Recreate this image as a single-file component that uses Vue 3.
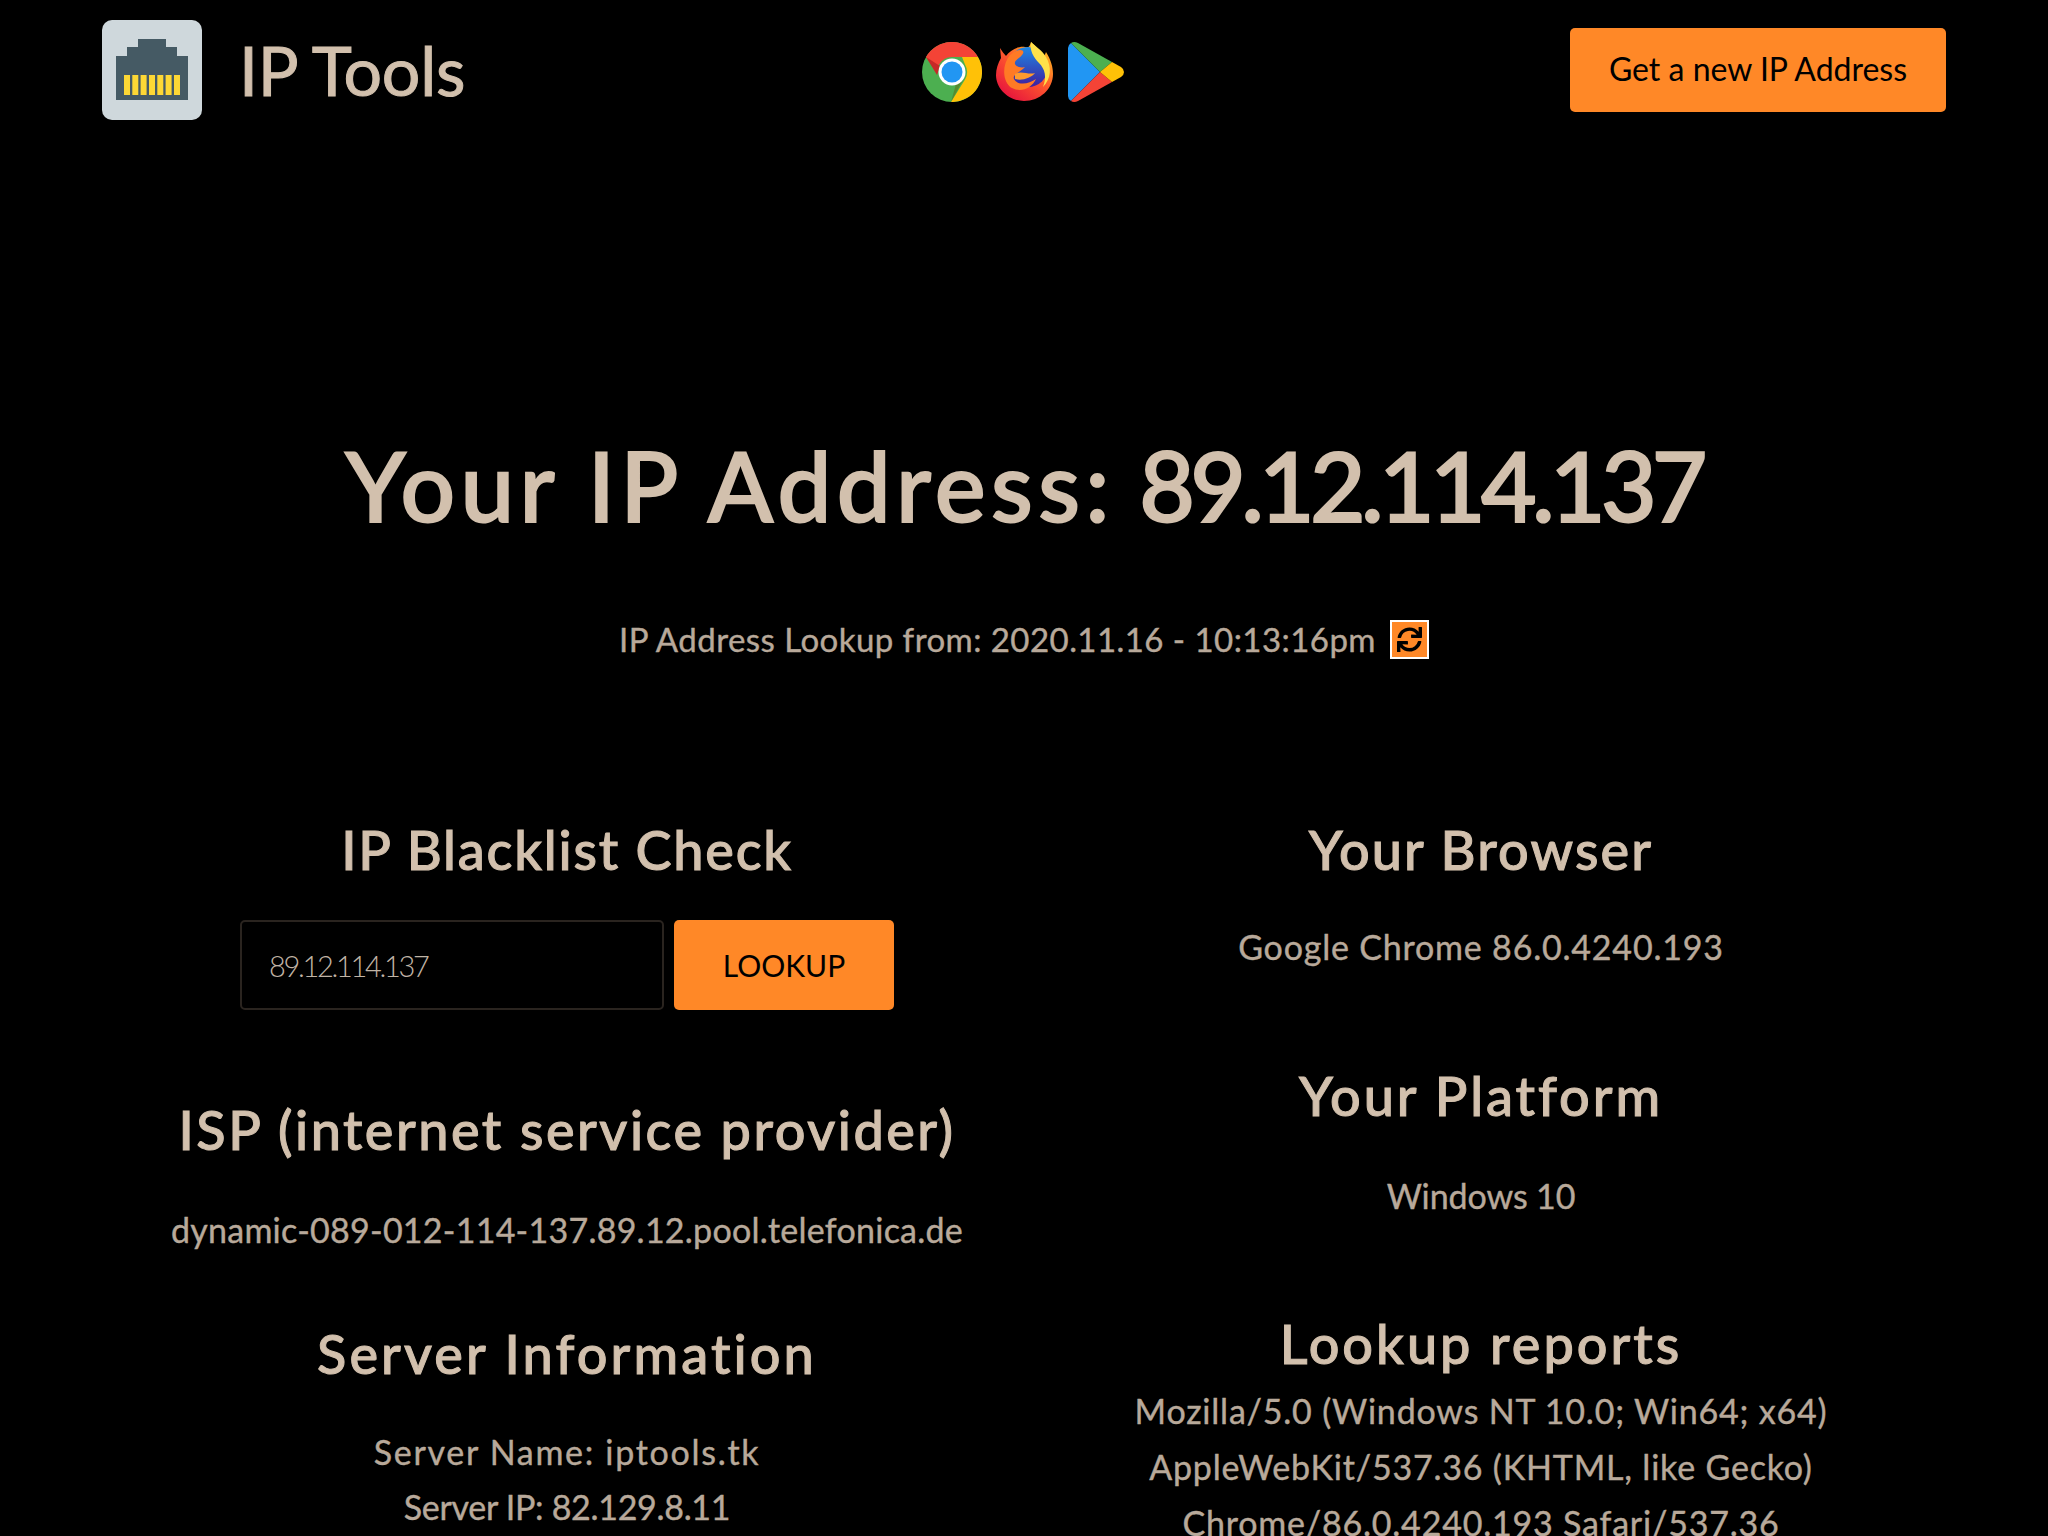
<script setup>
const reportLines = [
  'Mozilla/5.0 (Windows NT 10.0; Win64; x64)',
  'AppleWebKit/537.36 (KHTML, like Gecko)',
  'Chrome/86.0.4240.193 Safari/537.36',
];
</script>

<template>
  <div class="page">
    <header class="topbar">
      <a class="brand">
        <svg class="brand-icon" viewBox="0 0 100 100">
          <rect width="100" height="100" rx="10" fill="#cfd8dc" />
          <path d="M14 80V36H25V27H36V19H64V27H75V36H86V80Z" fill="#455a64" />
          <g fill="#fdd835">
            <rect x="22" y="55" width="6" height="20" />
            <rect x="30.3" y="55" width="6" height="20" />
            <rect x="38.6" y="55" width="6" height="20" />
            <rect x="47" y="55" width="6" height="20" />
            <rect x="55.3" y="55" width="6" height="20" />
            <rect x="63.6" y="55" width="6" height="20" />
            <rect x="72" y="55" width="6" height="20" />
          </g>
        </svg>
        <span class="brand-name">IP Tools</span>
      </a>

      <div class="stores">
        <svg width="60" height="60" viewBox="0 0 60 60">
          <circle cx="30" cy="30" r="30" fill="#4caf50" />
          <path d="M4 15A30 30 0 0 1 56 15H30A15 15 0 0 0 17 22.5L15 30Z" fill="#f44336" />
          <path d="M4 15L15 33L18 24Z" fill="#c62828" />
          <path d="M56 15A30 30 0 0 1 29 60L43 37.5A15 15 0 0 0 43 22.5L40 15Z" fill="#ffc107" />
          <path d="M29 60L41 38L34 42Z" fill="#558b2f" />
          <circle cx="30" cy="30" r="13.5" fill="#fff" />
          <circle cx="30" cy="30" r="10.5" fill="#2196f3" />
        </svg>
        <svg width="60" height="60" viewBox="0 0 60 60">
          <defs>
            <linearGradient id="foxBody" x1="0.8" y1="0.1" x2="0.2" y2="0.9">
              <stop offset="0" stop-color="#ffb120" />
              <stop offset="0.45" stop-color="#ff5a2c" />
              <stop offset="1" stop-color="#e8193c" />
            </linearGradient>
            <linearGradient id="foxGlobe" x1="0.5" y1="0" x2="0.5" y2="1">
              <stop offset="0" stop-color="#1e88e5" />
              <stop offset="1" stop-color="#3f1f9e" />
            </linearGradient>
          </defs>
          <path d="M5 6L6 16C3 21 1 27 1 33C1 47 14 59 29 59C45 59 58 47 58 32C58 25 56 18 51 10L49 15C45 8 40 4 36 0C35 4 34 6 30 5C22 4 15 9 11 14C9 12 7 9 5 6Z" fill="url(#foxBody)" />
          <circle cx="33" cy="25" r="20" fill="url(#foxGlobe)" />
          <path d="M15 13C22 6 32 7 27 13C24 17 19 18 20 22C21 25 27 26 30 25C26 30 17 32 19 37C23 44 34 42 41 37C37 46 26 51 17 46C8 41 6 24 15 13Z" fill="#ff7a25" />
          <path d="M20 32C26 28 33 33 40 31C36 36 27 39 20 37Z" fill="#ff9b2e" />
          <path d="M36 0C40 4 47 8 51 15C57 25 56 37 48 45C52 35 50 27 44 21C39 16 34 8 36 0Z" fill="#ffe14a" />
        </svg>
        <svg width="56" height="60" viewBox="0 0 56 60">
          <path d="M3 1L32 30L3 59Q0 57 0 54V6Q0 3 3 1Z" fill="#2196f3" />
          <path d="M3 1Q6 -1 10 1L44 20L32 30Z" fill="#4caf50" />
          <path d="M3 59L32 30L44 40L10 59Q6 61 3 59Z" fill="#f44336" />
          <path d="M44 20L53 25Q56 27 56 30Q56 33 53 35L44 40L32 30Z" fill="#ffc107" />
        </svg>
      </div>

      <button class="btn btn-new">Get a new IP Address</button>
    </header>

    <section class="hero">
      <h1><span class="ip-label">Your IP Address:</span> <span class="ip-value">89.12.114.137</span></h1>
      <p class="lookup-time">
        IP Address Lookup from: 2020.11.16 - 10:13:16pm
        <span class="refresh">
          <svg width="25" height="25" viewBox="0 0 512 512">
            <path d="M440.65 12.57l4 82.77A247.16 247.16 0 0 0 255.83 8C134.73 8 33.91 94.92 12.29 209.82A12 12 0 0 0 24.09 224h49.05a12 12 0 0 0 11.67-9.26 175.91 175.91 0 0 1 317-56.94l-101.46-4.86a12 12 0 0 0-12.57 12v47.41a12 12 0 0 0 12 12H500a12 12 0 0 0 12-12V12a12 12 0 0 0-12-12h-47.37a12 12 0 0 0-11.98 12.57zM255.83 432a175.61 175.61 0 0 1-146-77.8l101.8 4.87a12 12 0 0 0 12.57-12v-47.4a12 12 0 0 0-12-12H12a12 12 0 0 0-12 12V500a12 12 0 0 0 12 12h47.35a12 12 0 0 0 12-12.6l-4.15-82.57A247.17 247.17 0 0 0 255.83 504c121.11 0 221.93-86.92 243.55-201.82a12 12 0 0 0-11.8-14.18h-49.05a12 12 0 0 0-11.67 9.26A175.86 175.86 0 0 1 255.83 432z" fill="#000" />
          </svg>
        </span>
      </p>
    </section>

    <main class="columns">
      <div class="col">
        <h2 class="blacklist-title">IP Blacklist Check</h2>
        <form class="lookup-form" @submit.prevent>
          <input class="ip-input" type="text" value="89.12.114.137" />
          <button class="btn btn-lookup">LOOKUP</button>
        </form>
        <h2 class="isp-title">ISP (internet service provider)</h2>
        <p class="isp-host">dynamic-089-012-114-137.89.12.pool.telefonica.de</p>
        <h2 class="server-title">Server Information</h2>
        <p class="server-name">Server Name: iptools.tk</p>
        <p class="server-line">Server IP: 82.129.8.11</p>
      </div>

      <div class="col">
        <h2 class="browser-title">Your Browser</h2>
        <p class="browser-name">Google Chrome 86.0.4240.193</p>
        <h2 class="platform-title">Your Platform</h2>
        <p class="platform-name">Windows 10</p>
        <h2 class="reports-title">Lookup reports</h2>
        <p v-for="line in reportLines" :key="line" class="report-line">{{ line }}</p>
      </div>
    </main>
  </div>
</template>

<style scoped>
.page {
  height: 1536px;
  overflow: hidden;
  background: #000;
  color: #d2c0ad;
  font-family: Lato, "Open Sans", sans-serif;
}

.topbar {
  display: flex;
  align-items: center;
  justify-content: space-between;
  box-sizing: border-box;
  padding: 20px 102px 0;
  height: 120px;
}

.brand {
  display: flex;
  align-items: center;
  gap: 37px;
  width: 376px;
}

.brand-icon {
  width: 100px;
  height: 100px;
}

.brand-name {
  font-size: 68px;
  line-height: 80px;
  letter-spacing: -0.2px;
  -webkit-text-stroke: 1px #d2c0ad;
}

.stores {
  display: flex;
  align-items: center;
  gap: 13px;
  margin: 3px 2px 0 0;
}

.btn {
  border: none;
  background: #ff8827;
  color: #000;
  font-family: inherit;
}

.btn-new {
  width: 376px;
  height: 84px;
  padding: 0 0 4px;
  border-radius: 5px;
  font-size: 32px;
}

.hero {
  text-align: center;
}

h1 {
  margin: 307px 0 0;
  font-size: 96px;
  line-height: 116px;
  font-weight: 500;
  -webkit-text-stroke: 2px #d2c0ad;
}

.ip-label {
  letter-spacing: 5.4px;
}

.ip-value {
  letter-spacing: -4.7px;
}

.lookup-time {
  margin: 76px 0 0;
  display: flex;
  align-items: center;
  justify-content: center;
  gap: 14px;
  font-size: 33px;
  line-height: 40px;
  letter-spacing: 0.45px;
}

.refresh {
  display: flex;
  align-items: center;
  justify-content: center;
  box-sizing: border-box;
  width: 39px;
  height: 39px;
  background: #ff8827;
  border: 2px solid #fff;
}

.columns {
  display: grid;
  grid-template-columns: 1fr 1fr;
  padding: 0 110px;
  margin-top: 160px;
}

.col {
  text-align: center;
}

h2 {
  margin: 0;
  font-size: 54px;
  line-height: 62px;
  font-weight: 500;
  letter-spacing: 2.5px;
  -webkit-text-stroke: 1px #d2c0ad;
}

p {
  margin: 0;
  font-size: 34px;
  line-height: 44px;
  color: #b8a99a;
  letter-spacing: 0.8px;
  -webkit-text-stroke: 0.4px #b8a99a;
}

.blacklist-title {
  letter-spacing: 1.8px;
}

.browser-title {
  letter-spacing: 2.1px;
}

.lookup-form {
  display: flex;
  justify-content: center;
  gap: 10px;
  margin-top: 39px;
}

.ip-input {
  box-sizing: border-box;
  width: 424px;
  height: 90px;
  padding: 0 27px;
  background: #000;
  border: 2px solid #2a241f;
  border-radius: 5px;
  color: #c0b4a6;
  font-family: inherit;
  font-size: 29px;
  font-weight: 300;
  letter-spacing: -2.3px;
  outline: none;
}

.btn-lookup {
  width: 220px;
  height: 90px;
  border-radius: 5px;
  font-size: 30px;
}

.isp-title {
  margin-top: 89px;
}

.isp-host {
  margin-top: 47px;
  letter-spacing: 0.25px;
}

.server-title {
  margin-top: 71px;
  letter-spacing: 3.1px;
}

.server-name {
  margin-top: 45px;
  letter-spacing: 1.7px;
}

.server-line {
  margin-top: 11px;
  letter-spacing: -0.3px;
}

.browser-name {
  margin-top: 44px;
}

.platform-title {
  margin-top: 96px;
  letter-spacing: 2.9px;
}

.platform-name {
  margin-top: 47px;
  letter-spacing: -0.1px;
}

.reports-title {
  margin-top: 95px;
  letter-spacing: 3px;
}

.report-line {
  margin-top: 12px;
}

.reports-title + .report-line {
  margin-top: 14px;
}
</style>

<style>
html,
body {
  background: #000;
}
</style>
